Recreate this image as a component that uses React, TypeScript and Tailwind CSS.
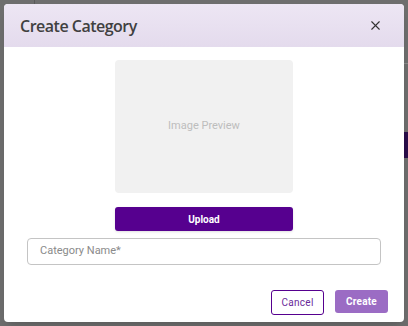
import { X } from "lucide-react";

export default function App() {
  return (
    <div className="relative w-[408px] h-[326px] bg-[#6e6e6e] overflow-hidden font-['Roboto',sans-serif]">
      {/* faded page behind the overlay */}
      <div className="absolute left-[34px] top-0 w-px h-[8px] bg-[#5a5a5a]" />
      <div className="absolute right-0 top-[63px] w-[6px] h-px bg-[#8a8a8a]" />
      <div className="absolute right-0 top-[132px] w-[6px] h-[26px] bg-[#2a0d4a]" />

      <div className="absolute left-[4px] top-[4px] w-[400px] h-[318px] bg-white rounded-[4px] overflow-hidden shadow-lg flex flex-col">
        <div className="h-[43px] flex items-center justify-between pl-[16px] pr-[21px] bg-gradient-to-b from-[#ede6f4] to-[#e4dbed]">
          <h2 className="text-[16px] text-[#404040] font-['Open_Sans',sans-serif] font-semibold tracking-[-0.5px]">Create Category</h2>
          <X className="w-[15px] h-[15px] text-[#333]" strokeWidth={1.8} />
        </div>

        <div className="flex flex-col items-center pt-[13px]">
          <div className="w-[178px] h-[133px] bg-[#f1f1f1] rounded-[4px] flex items-center justify-center">
            <span className="text-[11px] text-[#bdbdbd]">Image Preview</span>
          </div>
          <button className="mt-[14px] w-[178px] h-[24px] bg-[#56008f] rounded-[3px] text-white text-[10px] font-bold shadow-sm">
            Upload
          </button>
        </div>

        <div className="px-[23px] mt-[7px]">
          <div className="h-[27px] border border-[#c4c4c4] rounded-[4px] flex items-center pl-[12px]">
            <span className="text-[11px] text-[#8a8a8a]">Category Name*</span>
          </div>
        </div>

        <div className="flex justify-end gap-[11px] pr-[16px] mt-[25px]">
          <button className="w-[53px] h-[25px] border border-[#56008f] rounded-[3px] text-[#6a2a9a] text-[10px] font-normal tracking-[0.3px]">
            Cancel
          </button>
          <button className="w-[53px] h-[23px] bg-[#9b6cc4] rounded-[3px] text-white text-[10px] font-bold tracking-[0.2px]">
            Create
          </button>
        </div>
      </div>
    </div>
  );
}
